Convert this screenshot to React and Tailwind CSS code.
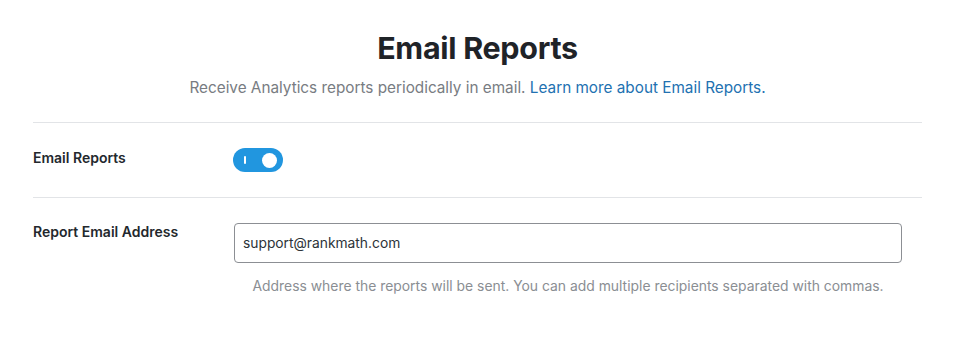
const App = () => {
  return (
    <div className="min-h-screen bg-white font-['Inter','Liberation_Sans',sans-serif] text-[#23282d]">
      <div className="ml-[33px] mr-[36px] pt-[29px]">
        <div className="text-center">
          <h1 className="text-[30.5px] font-bold leading-[38px] tracking-[-0.3px] text-[#1f2328]">Email Reports</h1>
          <p className="mt-[10px] text-[15.3px] leading-[22px] text-[#787c82]">
            Receive Analytics reports periodically in email.{' '}
            <a href="#" className="text-[#2271b1]">Learn more about Email Reports.</a>
          </p>
        </div>
        <div className="mt-[23px] border-t border-[#e2e4e7]" />

        <div className="flex items-start py-[25px]">
          <div className="-mt-[1px] w-[200px] text-[14px] font-semibold text-[#23282d]">Email Reports</div>
          <button className="relative flex h-[24px] w-[50px] items-center rounded-full bg-[#2196df]">
            <span className="absolute left-[11px] h-[8px] w-[2px] rounded bg-white" />
            <span className="absolute right-[6px] h-[15px] w-[15px] rounded-full bg-white" />
          </button>
        </div>
        <div className="border-t border-[#e2e4e7]" />

        <div className="flex items-start pt-[25px]">
          <div className="-mt-[2px] w-[201px] text-[14px] font-semibold text-[#23282d]">Report Email Address</div>
          <div className="mr-[20px] flex-1">
            <input
              type="text"
              defaultValue="support@rankmath.com"
              className="h-[40px] w-full rounded-[4px] border border-[#8c8f94] px-[8px] text-[13.8px] text-[#2c3338] outline-none"
            />
            <p className="mt-[13px] text-center text-[13.9px] text-[#8a8e93]">
              Address where the reports will be sent. You can add multiple recipients separated with commas.
            </p>
          </div>
        </div>
      </div>
    </div>
  );
};

export default App;
